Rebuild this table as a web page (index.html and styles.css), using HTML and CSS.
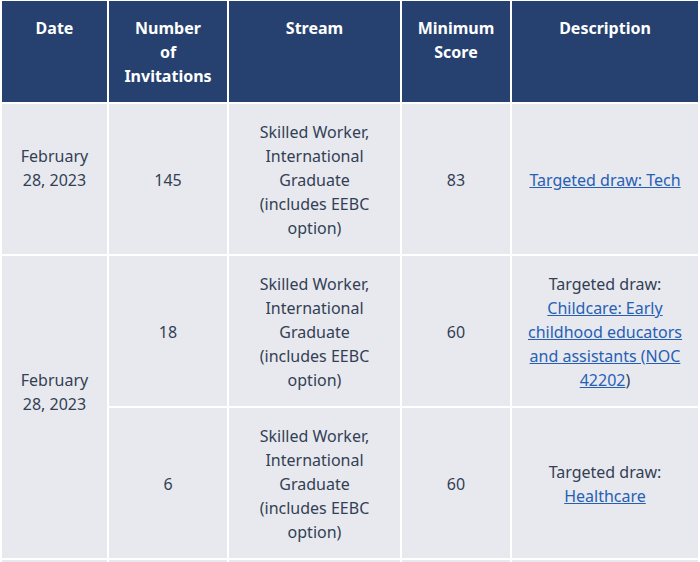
FILE: index.html
```html
<!DOCTYPE html>
<html lang="en">
<head>
<meta charset="utf-8">
<title>Invitations</title>
<link rel="stylesheet" href="styles.css">
</head>
<body>
<table class="draws">
  <colgroup>
    <col class="c-date"><col class="c-num"><col class="c-stream"><col class="c-min"><col class="c-desc">
  </colgroup>
  <thead>
    <tr>
      <th>Date</th>
      <th>Number<br>of<br>Invitations</th>
      <th>Stream</th>
      <th>Minimum<br>Score</th>
      <th>Description</th>
    </tr>
  </thead>
  <tbody>
    <tr>
      <td class="date">February<br>28, 2023</td>
      <td>145</td>
      <td>Skilled Worker,<br>International<br>Graduate<br>(includes EEBC<br>option)</td>
      <td>83</td>
      <td><a href="#">Targeted draw: Tech</a></td>
    </tr>
    <tr>
      <td class="date span" rowspan="2">February<br>28, 2023</td>
      <td>18</td>
      <td>Skilled Worker,<br>International<br>Graduate<br>(includes EEBC<br>option)</td>
      <td>60</td>
      <td>Targeted draw:<br><a href="#">Childcare: Early<br>childhood educators<br>and assistants (NOC<br>42202</a>)</td>
    </tr>
    <tr>
      <td>6</td>
      <td>Skilled Worker,<br>International<br>Graduate<br>(includes EEBC<br>option)</td>
      <td>60</td>
      <td>Targeted draw:<br><a href="#">Healthcare</a></td>
    </tr>
    <tr class="next">
      <td></td>
      <td></td>
      <td></td>
      <td></td>
      <td></td>
    </tr>
  </tbody>
</table>
</body>
</html>
```

FILE: styles.css
```css
html, body {
  margin: 0;
  padding: 0;
  height: 562px;
  overflow: hidden;
  background: #ffffff;
}

body {
  font-family: "Noto Sans", "Open Sans", sans-serif;
  font-size: 16px;
  line-height: 24px;
  color: #333f55;
}

.draws {
  width: 700px;
  margin-top: -1px;
  table-layout: fixed;
  border-collapse: separate;
  border-spacing: 2px;
}

.c-date { width: 105px; }
.c-num { width: 118px; }
.c-stream { width: 171px; }
.c-min { width: 108px; }
.c-desc { width: 186px; }

.draws th {
  background: #26416f;
  color: #ffffff;
  font-weight: 700;
  text-align: center;
  vertical-align: top;
  padding: 15px 6px 14px;
}

.draws td {
  background: #e8e9ee;
  text-align: center;
  vertical-align: middle;
  padding: 16px 6px 14px;
}

.draws td.date {
  padding-bottom: 38px;
}

.draws td.date.span {
  padding-bottom: 46px;
}

.draws tr.next td {
  height: 120px;
}

.draws a {
  color: #2660b5;
  text-decoration: underline;
}
```
